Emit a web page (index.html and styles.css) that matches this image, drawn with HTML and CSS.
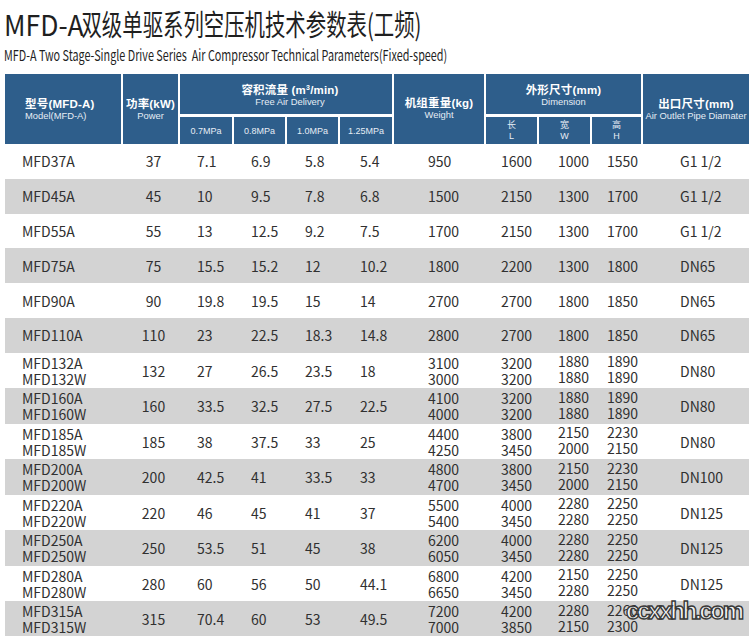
FILE: index.html
```html
<!DOCTYPE html>
<html lang="zh">
<head>
<meta charset="utf-8">
<title>MFD-A双级单驱系列空压机技术参数表(工频)</title>
<link rel="stylesheet" href="styles.css">
</head>
<body>
<div class="page">
  <h1 class="title"><span class="squeeze"><span class="lat">MFD-A</span>双级单驱系列空压机技术参数表(工频)</span></h1>
  <p class="subtitle"><span class="squeeze">MFD-A Two Stage-Single Drive Series&nbsp; Air Compressor Technical Parameters(Fixed-speed)</span></p>

  <div class="table">
    <div class="thead">
      <div class="th h-model"><b>型号(MFD-A)</b><i>Model(MFD-A)</i></div>
      <div class="th h-power"><b>功率(kW)</b><i>Power</i></div>
      <div class="th h-flow"><b>容积流量 (m<sup>3</sup>/min)</b><i>Free Air Delivery</i></div>
      <div class="th h-sub">0.7MPa</div>
      <div class="th h-sub">0.8MPa</div>
      <div class="th h-sub">1.0MPa</div>
      <div class="th h-sub">1.25MPa</div>
      <div class="th h-weight"><b>机组重量(kg)</b><i>Weight</i></div>
      <div class="th h-dim"><b>外形尺寸(mm)</b><i>Dimension</i></div>
      <div class="th h-sub h-lwh"><span>长</span><span>L</span></div>
      <div class="th h-sub h-lwh"><span>宽</span><span>W</span></div>
      <div class="th h-sub h-lwh"><span>高</span><span>H</span></div>
      <div class="th h-outlet"><b>出口尺寸(mm)</b><i>Air Outlet Pipe Diamater</i></div>
    </div>

    <div class="row"><div>MFD37A</div><div>37</div><div>7.1</div><div>6.9</div><div>5.8</div><div>5.4</div><div>950</div><div>1600</div><div>1000</div><div>1550</div><div>G1 1/2</div></div>
    <div class="row alt"><div>MFD45A</div><div>45</div><div>10</div><div>9.5</div><div>7.8</div><div>6.8</div><div>1500</div><div>2150</div><div>1300</div><div>1700</div><div>G1 1/2</div></div>
    <div class="row"><div>MFD55A</div><div>55</div><div>13</div><div>12.5</div><div>9.2</div><div>7.5</div><div>1700</div><div>2150</div><div>1300</div><div>1700</div><div>G1 1/2</div></div>
    <div class="row alt"><div>MFD75A</div><div>75</div><div>15.5</div><div>15.2</div><div>12</div><div>10.2</div><div>1800</div><div>2200</div><div>1300</div><div>1800</div><div>DN65</div></div>
    <div class="row"><div>MFD90A</div><div>90</div><div>19.8</div><div>19.5</div><div>15</div><div>14</div><div>2700</div><div>2700</div><div>1800</div><div>1850</div><div>DN65</div></div>
    <div class="row alt"><div>MFD110A</div><div>110</div><div>23</div><div>22.5</div><div>18.3</div><div>14.8</div><div>2800</div><div>2700</div><div>1800</div><div>1850</div><div>DN65</div></div>

    <div class="row dbl"><div>MFD132A<br>MFD132W</div><div>132</div><div>27</div><div>26.5</div><div>23.5</div><div>18</div><div>3100<br>3000</div><div>3200<br>3200</div><div>1880<br>1880</div><div>1890<br>1890</div><div>DN80</div></div>
    <div class="row dbl alt"><div>MFD160A<br>MFD160W</div><div>160</div><div>33.5</div><div>32.5</div><div>27.5</div><div>22.5</div><div>4100<br>4000</div><div>3200<br>3200</div><div>1880<br>1880</div><div>1890<br>1890</div><div>DN80</div></div>
    <div class="row dbl"><div>MFD185A<br>MFD185W</div><div>185</div><div>38</div><div>37.5</div><div>33</div><div>25</div><div>4400<br>4250</div><div>3800<br>3450</div><div>2150<br>2000</div><div>2230<br>2150</div><div>DN80</div></div>
    <div class="row dbl alt"><div>MFD200A<br>MFD200W</div><div>200</div><div>42.5</div><div>41</div><div>33.5</div><div>33</div><div>4800<br>4700</div><div>3800<br>3450</div><div>2150<br>2000</div><div>2230<br>2150</div><div>DN100</div></div>
    <div class="row dbl"><div>MFD220A<br>MFD220W</div><div>220</div><div>46</div><div>45</div><div>41</div><div>37</div><div>5500<br>5400</div><div>4000<br>3450</div><div>2280<br>2280</div><div>2250<br>2250</div><div>DN125</div></div>
    <div class="row dbl alt"><div>MFD250A<br>MFD250W</div><div>250</div><div>53.5</div><div>51</div><div>45</div><div>38</div><div>6200<br>6050</div><div>4000<br>3450</div><div>2280<br>2280</div><div>2250<br>2250</div><div>DN125</div></div>
    <div class="row dbl"><div>MFD280A<br>MFD280W</div><div>280</div><div>60</div><div>56</div><div>50</div><div>44.1</div><div>6800<br>6650</div><div>4200<br>3450</div><div>2150<br>2280</div><div>2250<br>2250</div><div>DN125</div></div>
    <div class="row dbl alt"><div>MFD315A<br>MFD315W</div><div>315</div><div>70.4</div><div>60</div><div>53</div><div>49.5</div><div>7200<br>7000</div><div>4200<br>3850</div><div>2280<br>2150</div><div>2260<br>2300</div><div></div></div>
  </div>

  <div class="watermark">ccxxhh.com</div>
</div>
</body>
</html>
```

FILE: styles.css
```css
* { box-sizing: border-box; }

html, body {
  margin: 0;
  padding: 0;
  background: #ffffff;
}

.page {
  position: relative;
  width: 754px;
  height: 636px;
  overflow: hidden;
  padding: 0 5px;
  font-family: "Noto Sans CJK SC", "Noto Sans", sans-serif;
  color: #333333;
}

.squeeze {
  display: inline-block;
  white-space: pre;
  transform-origin: 0 50%;
}

.title {
  margin: 0;
  padding-top: 2px;
  height: 44px;
  line-height: 42px;
  font-size: 29px;
  font-weight: 400;
  color: #1f1f1f;
  margin-left: -1px;
}
.title .squeeze { transform: scaleX(0.703); }
.title .lat {
  display: inline-block;
  transform: scaleX(1.3);
  transform-origin: 0 50%;
  margin-right: 23px;
}

.subtitle {
  margin: 0 0 8px -1px;
  height: 22px;
  line-height: 22px;
  font-size: 15px;
  color: #1f1f1f;
}
.subtitle .squeeze { transform: scaleX(0.72); }

/* ---------- table ---------- */
.table {
  width: 744px;
}

.thead {
  display: grid;
  grid-template-columns: 116px 55px 52px 51px 51px 52px 90px 51px 51px 49px 106px;
  grid-template-rows: 40px 27px;
  column-gap: 2px;
  row-gap: 3px;
}

.th {
  background: #2e5e8b;
  color: #ffffff;
  display: flex;
  flex-direction: column;
  justify-content: center;
  align-items: center;
  text-align: center;
  font-family: "Liberation Sans", "Noto Sans CJK SC", sans-serif;
}

.th b {
  display: block;
  font-size: 11.5px;
  line-height: 11px;
  font-weight: 700;
  letter-spacing: 0.2px;
}
.th i {
  display: block;
  font-style: normal;
  font-size: 9.4px;
  line-height: 11px;
  color: #e6edf5;
}
.th sup {
  font-size: 7px;
  line-height: 0;
  vertical-align: 4px;
}

.h-model  { grid-column: 1; grid-row: 1 / 3; align-items: flex-start; padding-left: 20px; padding-top: 2px; }
.h-power  { grid-column: 2; grid-row: 1 / 3; padding-top: 2px; }
.h-flow   { grid-column: 3 / 7; grid-row: 1; padding-left: 8px; padding-top: 3px; }
.h-weight { grid-column: 7; grid-row: 1 / 3; }
.h-dim    { grid-column: 8 / 11; grid-row: 1; padding-top: 3px; }
.h-outlet { grid-column: 11; grid-row: 1 / 3; padding-top: 2px; }

.h-sub {
  grid-row: 2;
  font-size: 9px;
  color: #e6edf5;
}
.h-lwh span {
  display: block;
  line-height: 11px;
  font-size: 9px;
}

/* ---------- body rows ---------- */
.row {
  display: grid;
  grid-template-columns: 116px 55px 52px 51px 51px 52px 90px 51px 51px 49px 106px;
  column-gap: 2px;
  align-items: center;
  height: 34.8px;
  font-size: 14px;
  line-height: 16px;
  color: #303030;
  white-space: nowrap;
}
.row.alt { background: #d3d3d3; }
.row.dbl { height: 35.5px; }

.row > :nth-child(1)  { padding-left: 17px; }
.row > :nth-child(2)  { padding-left: 6px; text-align: center; }
.row > :nth-child(3)  { padding-left: 17px; }
.row > :nth-child(4)  { padding-left: 17px; }
.row > :nth-child(5)  { padding-left: 18px; }
.row > :nth-child(6)  { padding-left: 20px; }
.row > :nth-child(7)  { padding-left: 34px; }
.row > :nth-child(8)  { padding-left: 15px; }
.row > :nth-child(9)  { padding-left: 19px; }
.row > :nth-child(10) { padding-left: 15px; }
.row > :nth-child(11) { padding-left: 37px; }
.row.dbl > :nth-child(9),
.row.dbl > :nth-child(10) { padding-bottom: 3px; }

/* ---------- watermark ---------- */
.watermark {
  position: absolute;
  left: 626px;
  top: 597px;
  font-family: "Liberation Sans", sans-serif;
  font-weight: 700;
  font-size: 24px;
  line-height: 28px;
  letter-spacing: -2.3px;
  color: #f6f6f6;
  -webkit-text-stroke: 1.4px #3a3a3a;
}
```
